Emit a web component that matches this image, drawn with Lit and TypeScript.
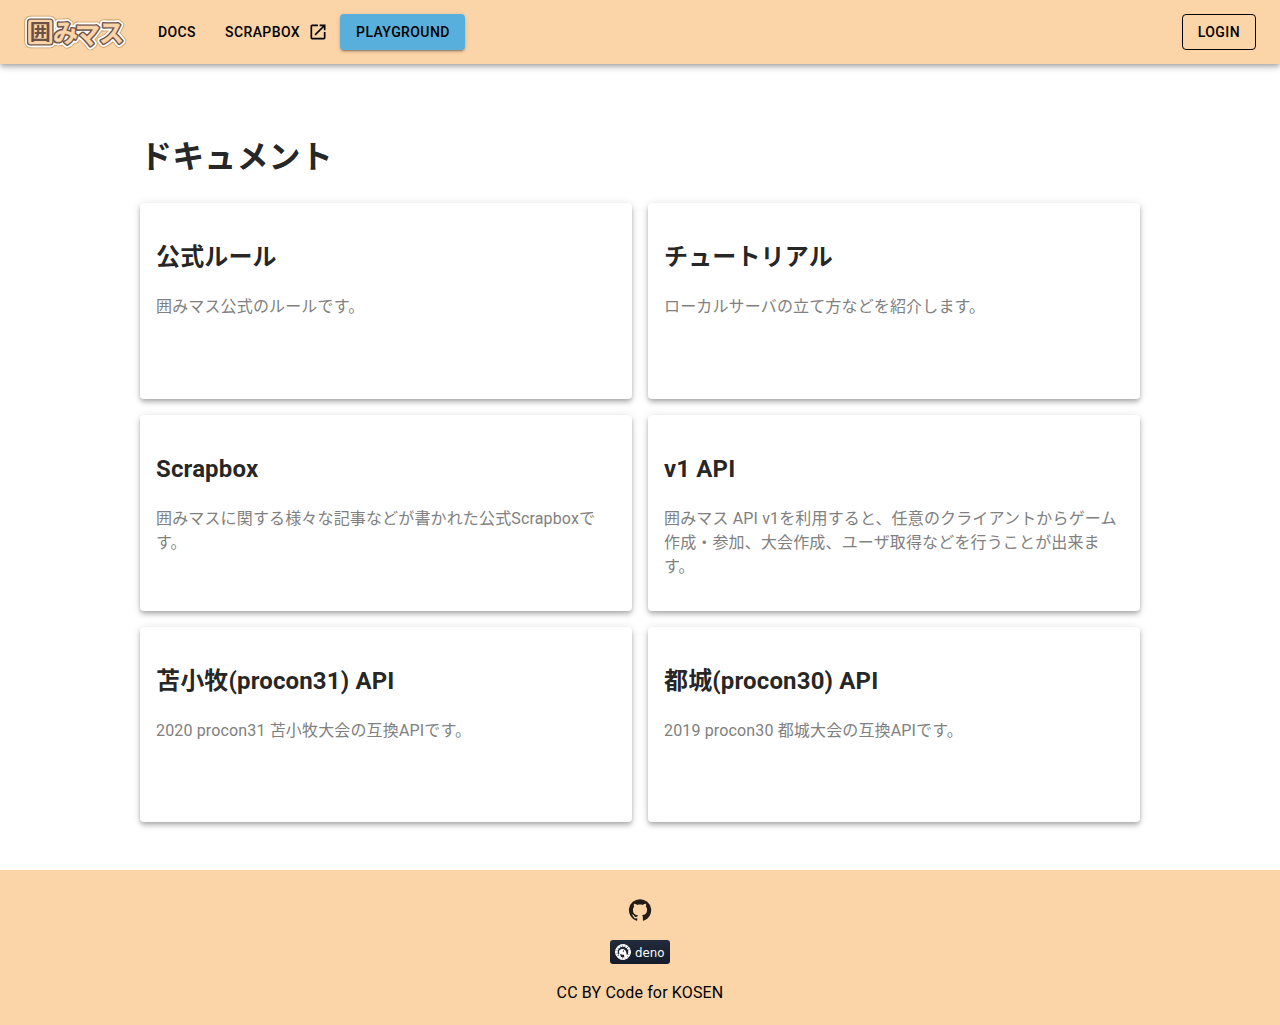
import { LitElement, html, svg, css } from "lit";
import { customElement } from "lit/decorators.js";

interface Doc {
  title: string;
  text: string;
}

const docs: Doc[] = [
  { title: "公式ルール", text: "囲みマス公式のルールです。" },
  { title: "チュートリアル", text: "ローカルサーバの立て方などを紹介します。" },
  { title: "Scrapbox", text: "囲みマスに関する様々な記事などが書かれた公式Scrapboxです。" },
  {
    title: "v1 API",
    text: "囲みマス API v1を利用すると、任意のクライアントからゲーム作成・参加、大会作成、ユーザ取得などを行うことが出来ます。",
  },
  { title: "苫小牧(procon31) API", text: "2020 procon31 苫小牧大会の互換APIです。" },
  { title: "都城(procon30) API", text: "2019 procon30 都城大会の互換APIです。" },
];

@customElement("app-root")
export class AppRoot extends LitElement {
  static styles = css`
    :host {
      display: block;
      font-family: Roboto, "Noto Sans CJK JP", sans-serif;
      font-size: 16px;
      line-height: 1.5;
      letter-spacing: 0.15px;
      color: rgba(0, 0, 0, 0.87);
      background: #fff;
    }
    * {
      box-sizing: border-box;
    }
    .bar {
      height: 64px;
      padding: 0 24px;
      display: flex;
      align-items: center;
      background: #fbd4a8;
      position: relative;
      box-shadow: 0 2px 4px -1px rgba(0, 0, 0, 0.2), 0 4px 5px rgba(0, 0, 0, 0.14),
        0 1px 10px rgba(0, 0, 0, 0.12);
    }
    .logo {
      display: block;
      width: 102px;
      height: 64px;
      flex: none;
      overflow: visible;
      letter-spacing: 0;
    }
    .logo text {
      font-family: "Noto Sans CJK JP", sans-serif;
      font-weight: 700;
    }
    .logo g {
      stroke-linejoin: round;
    }
    .gold {
      fill: #c99a5b;
      stroke: #c99a5b;
      stroke-width: 8.4px;
    }
    .white {
      fill: #fff;
      stroke: #fff;
      stroke-width: 6.8px;
    }
    .brown {
      fill: #6b5048;
      stroke: #6b5048;
      stroke-width: 3.2px;
    }
    .peach {
      fill: #fbd4a8;
      stroke: #fbd4a8;
      stroke-width: 0.3px;
    }
    .peach rect {
      fill: #fbd4a8;
      stroke-width: 0.6px;
    }
    .peach text {
      stroke-width: 0.3px;
    }
    .peach .box {
      fill: #6b5048;
      stroke: none;
    }
    .button {
      height: 36px;
      display: flex;
      align-items: center;
      border: 0;
      border-radius: 4px;
      background: none;
      padding: 0 16px;
      font: 500 14px/24px Roboto, sans-serif;
      letter-spacing: 0.4px;
      color: #000;
    }
    .docs {
      margin-left: 16px;
    }
    .scrapbox {
      padding: 0 12px 0 13px;
    }
    .open {
      width: 20px;
      height: 20px;
      margin-left: 8px;
      fill: currentColor;
    }
    .play {
      width: 125px;
      background: #59afdb;
      white-space: nowrap;
      box-shadow: 0 3px 1px -2px rgba(0, 0, 0, 0.2), 0 2px 2px rgba(0, 0, 0, 0.14),
        0 1px 5px rgba(0, 0, 0, 0.12);
    }
    .login {
      margin-left: auto;
      border: 1px solid #000;
      padding: 0 15px;
    }
    .content {
      width: 1000px;
      margin: 0 auto;
      padding: 69.44px 0 48px;
    }
    h1 {
      font-size: 32px;
      line-height: 48px;
      margin: 0 0 21.44px;
    }
    .grid {
      display: grid;
      grid-template-columns: 1fr 1fr;
      gap: 16px;
    }
    .card {
      height: 195.84px;
      padding: 36.1px 16px 0;
      border-radius: 4px;
      background: #fff;
      box-shadow: 0 2px 4px -1px rgba(0, 0, 0, 0.2), 0 4px 5px rgba(0, 0, 0, 0.14),
        0 1px 10px rgba(0, 0, 0, 0.12);
    }
    h2 {
      font-size: 24px;
      line-height: 36px;
      margin: 0 0 19.92px;
    }
    .card p {
      margin: 0;
      color: gray;
      line-height: 24px;
    }
    .footer {
      height: 154.6px;
      padding: 20px 0;
      display: flex;
      flex-direction: column;
      align-items: center;
      background: #fbd4a8;
      color: #000;
    }
    .github {
      width: 40px;
      height: 40px;
      padding: 8px;
      fill: rgba(0, 0, 0, 0.87);
    }
    .deno {
      width: 60px;
      height: 24px;
      margin: 9.6px 0 17px;
      display: block;
      flex: none;
    }
    .deno text {
      font: 13px "DejaVu Sans", sans-serif;
      letter-spacing: 0;
      fill: #fff;
    }
    .footer p {
      margin: 0;
    }
  `;

  private logo() {
    const layers = ["gold", "white", "brown", "peach"];
    return html`<svg class="logo" viewBox="0 0 102 64" role="img" aria-label="囲みマス">
      ${layers.map(
        (name) => svg`<g class=${name}>
          <rect x="4.5" y="20" width="23.5" height="24" rx="2" />
          <text x="29 51 75" y="41.5 43.5 42" font-size="25">みマス</text>
        </g>`,
      )}
      <g class="peach"><text class="box" x="5.8" y="39.3" font-size="21">囲</text></g>
    </svg>`;
  }

  render() {
    return html`
      <header class="bar">
        ${this.logo()}
        <button class="button docs">DOCS</button>
        <button class="button scrapbox">
          SCRAPBOX
          <svg class="open" viewBox="0 0 24 24">
            <path d="M19 19H5V5h7V3H5c-1.11 0-2 .9-2 2v14c0 1.1.89 2 2 2h14c1.1 0 2-.9 2-2v-7h-2v7zM14 3v2h3.59l-9.83 9.83 1.41 1.41L19 6.41V10h2V3h-7z" />
          </svg>
        </button>
        <button class="button play">PLAYGROUND</button>
        <button class="button login">LOGIN</button>
      </header>
      <main class="content">
        <h1>ドキュメント</h1>
        <div class="grid">
          ${docs.map((d) => html`<article class="card"><h2>${d.title}</h2><p>${d.text}</p></article>`)}
        </div>
      </main>
      <footer class="footer">
        <svg class="github" viewBox="0 0 24 24">
          <path d="M12 1.27a11 11 0 00-3.48 21.46c.55.09.73-.28.73-.55v-1.84c-3.03.64-3.67-1.46-3.67-1.46-.55-1.29-1.28-1.65-1.28-1.65-.92-.65.1-.65.1-.65 1.1 0 1.73 1.1 1.73 1.1.92 1.65 2.57 1.2 3.21.92a2 2 0 01.64-1.47c-2.47-.27-5.04-1.19-5.04-5.5 0-1.1.46-2.1 1.2-2.84a3.76 3.76 0 010-2.93s.91-.28 3.11 1.1c1.8-.49 3.7-.49 5.5 0 2.1-1.38 3.02-1.1 3.02-1.1a3.76 3.76 0 01.1 2.93c.83.74 1.2 1.74 1.2 2.94 0 4.21-2.57 5.13-5.04 5.4.45.37.82.92.82 2.02v3.03c0 .27.1.64.73.55A11 11 0 0012 1.27" />
        </svg>
        <svg class="deno" viewBox="0 0 60 24">
          <defs>
            <linearGradient id="shade" x1="0" y1="0" x2="0" y2="1">
              <stop offset="0" stop-color="#222b3b" />
              <stop offset="1" stop-color="#141b2b" />
            </linearGradient>
          </defs>
          <rect width="60" height="24" rx="3" fill="url(#shade)" />
          <circle cx="13" cy="12" r="6.5" fill="none" stroke="#fff" stroke-width="2.6" stroke-dasharray="2.2 .5" />
          <circle cx="13" cy="12" r="7.3" fill="none" stroke="#fff" stroke-width="1" />
          <path d="M9 11.5c.4-1.9 1.9-2.7 3.6-2.6 1.9.1 3.1 1.3 3.5 3l1.2 5-2.8 1.5-.5-3.7c-1.3.2-2.1-.1-2.7-.5-1.5 0-2.5-1.2-2.3-2.7z" fill="#fff" />
          <path d="M9.2 13.5l1.5 5" stroke="#fff" stroke-width="1.4" />
          <circle cx="13.4" cy="11" r=".7" fill="#1b2333" />
          <text x="25" y="16.6" textLength="29.5" lengthAdjust="spacingAndGlyphs">deno</text>
        </svg>
        <p>CC BY Code for KOSEN</p>
      </footer>
    `;
  }
}
